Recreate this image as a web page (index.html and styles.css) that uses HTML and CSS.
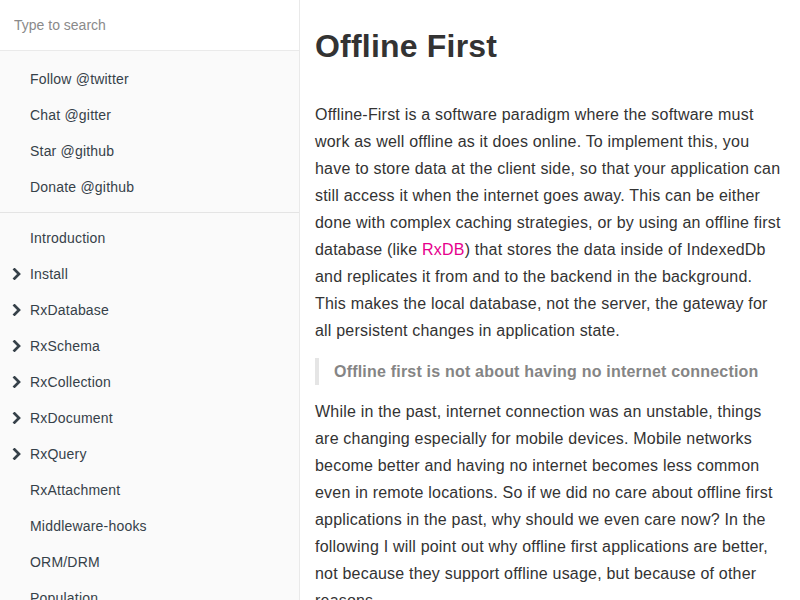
FILE: index.html
```html
<!DOCTYPE html>
<html>
<head>
<meta charset="utf-8">
<link rel="stylesheet" href="styles.css">
</head>
<body>
<div class="book">
  <aside class="summary">
    <div class="search"><input type="text" placeholder="Type to search"></div>
    <ul class="nav">
      <li><a>Follow @twitter</a></li>
      <li><a>Chat @gitter</a></li>
      <li><a>Star @github</a></li>
      <li><a>Donate @github</a></li>
      <li class="divider"></li>
      <li><a>Introduction</a></li>
      <li><a><svg class="chev" viewBox="0 0 10 12"><path d="M2.5 1.5 L7 6 L2.5 10.5" /></svg>Install</a></li>
      <li><a><svg class="chev" viewBox="0 0 10 12"><path d="M2.5 1.5 L7 6 L2.5 10.5" /></svg>RxDatabase</a></li>
      <li><a><svg class="chev" viewBox="0 0 10 12"><path d="M2.5 1.5 L7 6 L2.5 10.5" /></svg>RxSchema</a></li>
      <li><a><svg class="chev" viewBox="0 0 10 12"><path d="M2.5 1.5 L7 6 L2.5 10.5" /></svg>RxCollection</a></li>
      <li><a><svg class="chev" viewBox="0 0 10 12"><path d="M2.5 1.5 L7 6 L2.5 10.5" /></svg>RxDocument</a></li>
      <li><a><svg class="chev" viewBox="0 0 10 12"><path d="M2.5 1.5 L7 6 L2.5 10.5" /></svg>RxQuery</a></li>
      <li><a>RxAttachment</a></li>
      <li><a>Middleware-hooks</a></li>
      <li><a>ORM/DRM</a></li>
      <li><a>Population</a></li>
    </ul>
  </aside>
  <main class="page">
    <h1>Offline First</h1>
    <p>Offline-First is a software paradigm where the software must work as well offline as it does online. To implement this, you have to store data at the client side, so that your application can still access it when the internet goes away. This can be either done with complex caching strategies, or by using an offline first database (like <a class="link">RxDB</a>) that stores the data inside of IndexedDb and replicates it from and to the backend in the background. This makes the local database, not the server, the gateway for all persistent changes in application state.</p>
    <blockquote><strong>Offline first is not about having no internet connection</strong></blockquote>
    <p>While in the past, internet connection was an unstable, things are changing especially for mobile devices. Mobile networks become better and having no internet becomes less common even in remote locations. So if we did no care about offline first applications in the past, why should we even care now? In the following I will point out why offline first applications are better, not because they support offline usage, but because of other reasons.</p>
  </main>
</div>
</body>
</html>
```
FILE: styles.css
```css
html, body {
  margin: 0;
  padding: 0;
  height: 100%;
  overflow: hidden;
}
body {
  font-family: "Liberation Sans", Arial, sans-serif;
  color: #333;
  letter-spacing: 0.2px;
}
.book {
  display: flex;
  height: 600px;
}
.summary {
  width: 299px;
  flex: none;
  background: #fafafa;
  border-right: 1px solid #e9e9e9;
  overflow: hidden;
}
.search {
  background: #fff;
  height: 50px;
  border-bottom: 1px solid #eaeaea;
}
.search input {
  box-sizing: border-box;
  width: 100%;
  height: 50px;
  border: none;
  outline: none;
  background: transparent;
  padding: 0 14px;
  font-family: "Liberation Sans", Arial, sans-serif;
  font-size: 14px;
  letter-spacing: 0;
  color: #333;
}
.search input::placeholder {
  color: #8a8a8a;
}
.nav {
  list-style: none;
  margin: 0;
  padding: 10px 0;
}
.nav li a {
  display: flex;
  align-items: center;
  padding: 10px 15px 10px 30px;
  font-size: 14px;
  line-height: 16px;
  color: #364149;
  position: relative;
}
.nav li.divider {
  height: 1px;
  margin: 7px 0;
  background: #e4e4e4;
}
.chev {
  position: absolute;
  left: 12px;
  top: 12px;
  width: 10px;
  height: 12px;
  fill: none;
  stroke: #364149;
  stroke-width: 2.7;
  stroke-linecap: square;
  stroke-linejoin: miter;
}
.page {
  flex: 1;
  padding: 19px 15px 0;
  min-width: 0;
  overflow: hidden;
}
h1 {
  margin: 0 0 28px;
  font-size: 32px;
  line-height: 54px;
  font-weight: bold;
  color: #333;
}
p {
  margin: 0 0 13.6px;
  font-size: 16px;
  line-height: 27px;
  color: #333;
}
.link {
  color: #e6008d;
}
blockquote {
  margin: 0 0 13.6px;
  padding: 0 15px;
  border-left: 4px solid #e5e5e5;
  color: #858585;
  font-size: 16px;
  line-height: 27px;
}
```
